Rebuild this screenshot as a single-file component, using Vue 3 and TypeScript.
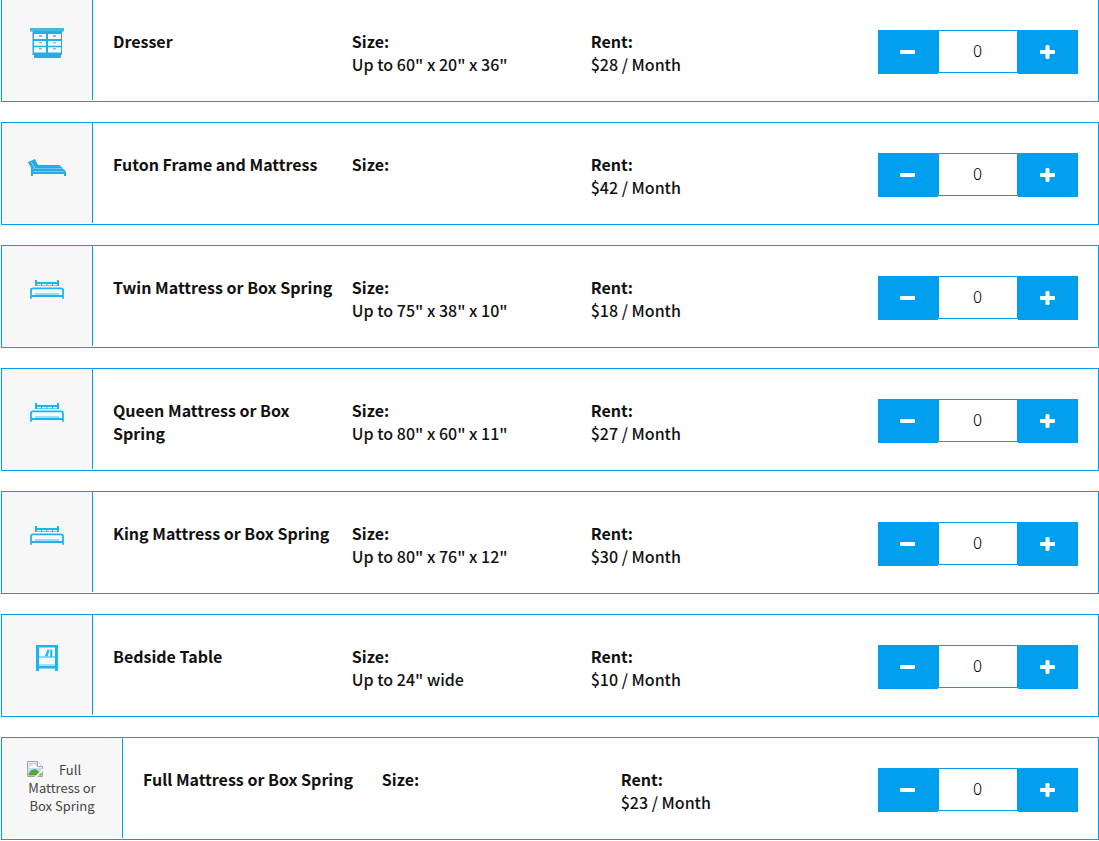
<script setup lang="ts">
import { ref } from 'vue'

type Icon = 'dresser' | 'futon' | 'bed' | 'table' | 'missing'

interface Item {
  id: string
  name: string
  size: string
  rent: number
  icon: Icon
  quantity: number
}

const items = ref<Item[]>([
  { id: 'dresser', name: 'Dresser', size: 'Up to 60" x 20" x 36"', rent: 28, icon: 'dresser', quantity: 0 },
  { id: 'futon', name: 'Futon Frame and Mattress', size: '', rent: 42, icon: 'futon', quantity: 0 },
  { id: 'twin', name: 'Twin Mattress or Box Spring', size: 'Up to 75" x 38" x 10"', rent: 18, icon: 'bed', quantity: 0 },
  { id: 'queen', name: 'Queen Mattress or Box Spring', size: 'Up to 80" x 60" x 11"', rent: 27, icon: 'bed', quantity: 0 },
  { id: 'king', name: 'King Mattress or Box Spring', size: 'Up to 80" x 76" x 12"', rent: 30, icon: 'bed', quantity: 0 },
  { id: 'bedside', name: 'Bedside Table', size: 'Up to 24" wide', rent: 10, icon: 'table', quantity: 0 },
  { id: 'full', name: 'Full Mattress or Box Spring', size: '', rent: 23, icon: 'missing', quantity: 0 },
])

function change(item: Item, step: number) {
  item.quantity = Math.max(0, Number(item.quantity) + step)
}
</script>

<template>
  <main class="list">
    <article v-for="item in items" :key="item.id" class="card">
      <div v-if="item.icon === 'missing'" class="tile tile-wide">
        <svg class="broken" viewBox="0 0 16 16" aria-hidden="true">
          <path d="M.5.5h10l5 5v10H.5z" fill="#fff" stroke="#a3a3a3" />
          <path d="M1.500 1.500h9v5h4v8h-13z" fill="#c3d9f7" />
          <path d="M3 7c-1-2 1-3 2-2 0-2 4-2 4 0 2 0 2 2 1 2z" fill="#fff" />
          <path d="M1.500 14.500v-2C4 8 9 7 11 10l3.500 2v2.500z" fill="#57a639" />
          <path d="M10.500.5v5h5" fill="#fff" stroke="#a3a3a3" />
          <path d="M16 7.500V10l-6 6H7.500z" fill="#f7f7f7" />
        </svg>
        {{ item.name }}
      </div>
      <div v-else class="tile">
        <svg class="icon" viewBox="0 0 50 40" aria-hidden="true">
          <g v-if="item.icon === 'dresser'" fill="#29abe2">
            <path d="M8 8h34v3.500H8z" opacity=".85" />
            <path d="M10.500 11H40v24h-1v3H12v-3h-1.500z" />
            <path
              d="M12 14h12v5H12zm14 0h13v5H26zM12 21h12v4.700H12zm14 0h13v4.700H26zM12 27.300h12v5.200H12zm14 0h13v5.200H26z"
              fill="#f7f7f7"
            />
            <path
              d="M17 15h3v2h-3zm14 0h3v2h-3zM17 22h3v1.200h-3zm14 0h3v1.200h-3zM17 28h3v1.500h-3zm14 0h3v1.500h-3z"
              opacity=".65"
            />
          </g>
          <g v-else-if="item.icon === 'futon'" fill="#29abe2">
            <path d="m6 19 7-3 3 6h20c2 0 4 2 5 4 2 1 3 2 3 4v3h-2v-2H11v2H9v-8z" />
            <path d="M11 25.500h29M11 28.500h31" fill="none" stroke="#6dc7ec" />
            <path d="m9 19 4 6" fill="none" stroke="#8dd3f0" />
          </g>
          <g v-else-if="item.icon === 'bed'" fill="#1cb5f1">
            <path d="M13 14h2v6h-2zm22 0h2v6h-2z" />
            <path d="M15 16h20v2H15z" />
            <path d="M19 18h1v2h-1zm5.500 0h1v2h-1zm5.500 0h1v2h-1z" />
            <path d="M15 19h20v1H15z" opacity=".65" />
            <path d="M13 27h24v2H13z" opacity=".4" />
            <path d="M9 32.700V24q0-1.700 2-1.700h28q2 0 2 1.700v8.700M9 30h32" fill="none" stroke="#1cb5f1" stroke-width="1.800" />
          </g>
          <g v-else fill="#1cb5f1">
            <path d="M14 10h22v26h-3v-2.500H17V36h-3z" />
            <path d="M17 12.500h16V21H17zm0 10h16V29H17z" fill="#f7f7f7" />
            <path d="M17 21h16v1.500H17z" fill="#8dd8f8" />
            <path d="m23 21 2.500-6.500 2 .5-2 6.500zm5.300-6.500h2V22h-2z" />
            <path d="M17 29h16v2H17z" fill="#a5e0f8" />
          </g>
        </svg>
      </div>

      <div class="cell name">{{ item.name }}</div>
      <div class="cell">
        <b>Size:</b>
        <span>{{ item.size }}</span>
      </div>
      <div class="cell">
        <b>Rent:</b>
        <span>${{ item.rent }} / Month</span>
      </div>

      <div class="stepper">
        <button type="button" :aria-label="`Remove one ${item.name}`" @click="change(item, -1)">
          <svg class="sign" viewBox="0 0 16 16" aria-hidden="true">
            <rect x="0" y="6" width="15" height="4" rx="1" fill="#fff" />
          </svg>
        </button>
        <input
          v-model.number="item.quantity"
          type="text"
          inputmode="numeric"
          :aria-label="`Quantity of ${item.name}`"
        />
        <button type="button" :aria-label="`Add one ${item.name}`" @click="change(item, 1)">
          <svg class="sign" viewBox="0 0 16 16" aria-hidden="true">
            <path
              d="M7 1h1q1.500 0 1.500 1v4H14q1 0 1 1v2q0 1-1 1H9.500v4q0 1-1.500 1H7q-1.500 0-1.500-1v-4H1q-1 0-1-1V7q0-1 1-1h4.500V2Q5.500 1 7 1z"
              fill="#fff"
            />
          </svg>
        </button>
      </div>
    </article>
  </main>
</template>

<style>
body {
  margin: 0;
  background: #fff;
}
</style>

<style scoped>
.list {
  display: flex;
  flex-direction: column;
  gap: 20px;
  margin-top: -1px;
  padding-left: 1px;
  color: #111;
  font-family: "Source Sans Pro", "Noto Sans CJK SC", "Noto Sans", sans-serif;
  font-size: 16px;
  font-weight: 500;
  line-height: 23px;
}

.card {
  display: flex;
  align-items: flex-start;
  box-sizing: border-box;
  min-height: 103px;
  padding-right: 20px;
  border: 1px solid #009fee;
}

.tile {
  box-sizing: border-box;
  flex: none;
  align-self: stretch;
  width: 91px;
  margin: 0 20px 1px 0;
  padding: 20px;
  border-right: 1px solid #009fee;
  background: #f7f7f7;
}

.tile-wide {
  width: 121px;
  padding: 23px 25px;
  color: #444;
  font-size: 13px;
  font-weight: 400;
  line-height: 18px;
  text-align: center;
}

.icon {
  display: block;
  width: 50px;
  height: 40px;
}

.broken {
  float: left;
  width: 16px;
  height: 16px;
}

.cell {
  box-sizing: border-box;
  flex: none;
  width: 22.2%;
  padding: 30px 12px 0 0;
}

.cell b,
.cell span {
  display: block;
}

.name,
.cell b {
  font-weight: 700;
}

.stepper {
  display: flex;
  align-items: flex-start;
  margin: 30px 0 0 auto;
}

.stepper button {
  display: flex;
  align-items: center;
  justify-content: center;
  width: 60px;
  height: 44px;
  padding: 0;
  border: 0;
  background: #009fee;
  cursor: pointer;
}

.sign {
  width: 16px;
  height: 16px;
}

.stepper input {
  box-sizing: border-box;
  width: 80px;
  height: 43px;
  padding: 0 1px 4px 0;
  border: 1px solid #009fee;
  border-radius: 0;
  background: #fff;
  color: #000;
  font: inherit;
  font-size: 17px;
  font-weight: 300;
  text-align: center;
}
</style>
